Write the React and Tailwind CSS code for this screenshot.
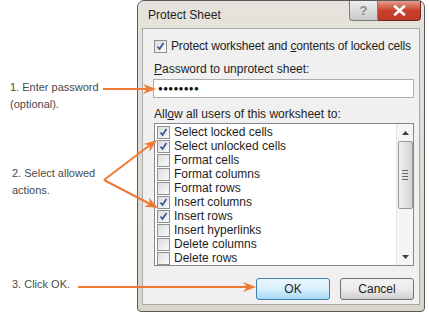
import React from 'react';

const items = [
  ['Select locked cells', true],
  ['Select unlocked cells', true],
  ['Format cells', false],
  ['Format columns', false],
  ['Format rows', false],
  ['Insert columns', true],
  ['Insert rows', true],
  ['Insert hyperlinks', false],
  ['Delete columns', false],
  ['Delete rows', false],
];

function Box({ checked }) {
  return (
    <span className="w-[13px] h-[13px] shrink-0 border border-[#8e8f8f] bg-gradient-to-br from-[#dcdcdc] to-[#fbfbfb] flex items-center justify-center">
      {checked && (
        <svg width="9" height="9" viewBox="0 0 9 9">
          <path d="M1.5 4.5 L3.5 7 L7.5 1" fill="none" stroke="#3a5a9c" strokeWidth="1.8" />
        </svg>
      )}
    </span>
  );
}

function Head({ x, y, dir }) {
  const c = Math.cos(dir);
  const s = Math.sin(dir);
  const pts = [
    [0, 0],
    [-13, -5],
    [-9, 0],
    [-13, 5],
  ].map(([a, b]) => `${x + a * c - b * s},${y + a * s + b * c}`);
  return <polygon points={pts.join(' ')} fill="#f07a35" />;
}

export default function App() {
  return (
    <div className="relative w-[429px] h-[314px] bg-white flex overflow-hidden font-['Liberation_Sans',sans-serif]">
      <div className="w-[137px] shrink-0 flex flex-col pl-[10px] pt-[79px] text-[11px] leading-[17px] text-[#4a4a4a]">
        <div>
          <div>1. Enter password</div>
          <div>(optional).</div>
        </div>
        <div className="mt-[52px] pl-[2px]">
          <div>2. Select allowed</div>
          <div>actions.</div>
        </div>
        <div className="mt-[77px] pl-[2px]">3. Click OK.</div>
      </div>

      <div className="w-[288px] h-[312px] shrink-0 flex flex-col rounded-t-[7px] rounded-b-[4px] border border-[#5a5a5a] bg-gradient-to-b from-[#e6e3dc] to-[#d9d5cc] text-[#1e1e1e] whitespace-nowrap">
        <div className="h-[27px] flex items-start">
          <div className="pl-[10px] pt-[6px] text-[12px] leading-[16px]">Protect Sheet</div>
          <div className="ml-auto mr-[3px] flex">
            <div className="w-[29px] h-[20px] border border-[#7c7c7c] border-t-0 rounded-bl-[4px] bg-gradient-to-b from-[#eeeeee] to-[#c9c9c9] flex items-center justify-center text-[13px] font-bold text-[#8a8a8a]">?</div>
            <div className="w-[43px] h-[20px] border border-[#6b2a22] border-t-0 border-l-0 rounded-br-[4px] bg-gradient-to-b from-[#e49c8c] via-[#c7402a] to-[#c2382a] flex items-center justify-center">
              <svg width="13" height="11" viewBox="0 0 13 11">
                <path d="M2 1.5 L11 9.5 M11 1.5 L2 9.5" stroke="#ffffff" strokeWidth="2.6" strokeLinecap="round" />
              </svg>
            </div>
          </div>
        </div>

        <div className="mx-[4px] mb-[6px] flex-1 border border-[#a9a9a9] bg-[#f0f0f0] pl-[11px] pr-[5px] pt-[9px] flex flex-col text-[12px] leading-[16px]">
          <div className="flex items-center gap-[4px]">
            <Box checked />
            <span className="tracking-[-0.15px]">
              Protect worksheet and <span className="underline">c</span>ontents of locked cells
            </span>
          </div>
          <div className="mt-[7px]">
            <span className="underline">P</span>assword to unprotect sheet:
          </div>
          <div className="mt-[2px] -ml-[1px] h-[19px] border border-[#abadb3] bg-white flex items-center pl-[4px] text-[8px] tracking-[0.3px] text-[#111]">
            ●●●●●●●●
          </div>
          <div className="mt-[8px]">
            All<span className="underline">o</span>w all users of this worksheet to:
          </div>
          <div className="mt-[1px] h-[143px] border border-[#828790] bg-white flex">
            <div className="flex-1 pl-[2px] pt-[1px] flex flex-col leading-[14px]">
              {items.map(([label, on]) => (
                <div key={label} className="h-[14.2px] flex items-center gap-[4px]">
                  <Box checked={on} />
                  <span>{label}</span>
                </div>
              ))}
            </div>
            <div className="w-[17px] bg-[#f5f5f5] border-l border-[#e6e6e6] flex flex-col items-center">
              <div className="h-[17px] flex items-center justify-center">
                <svg width="7" height="4" viewBox="0 0 7 4"><path d="M0 4 L3.5 0 L7 4Z" fill="#404040" /></svg>
              </div>
              <div className="w-[15px] h-[68px] rounded-[2px] border border-[#979797] bg-gradient-to-r from-[#f0f0f0] via-[#e3e3e3] to-[#d2d2d2] flex flex-col items-center justify-center gap-[2px]">
                <div className="w-[6px] h-[1px] bg-[#666]" />
                <div className="w-[6px] h-[1px] bg-[#666]" />
                <div className="w-[6px] h-[1px] bg-[#666]" />
                <div className="w-[6px] h-[1px] bg-[#666]" />
              </div>
              <div className="mt-auto h-[17px] flex items-center justify-center">
                <svg width="7" height="4" viewBox="0 0 7 4"><path d="M0 0 L3.5 4 L7 0Z" fill="#404040" /></svg>
              </div>
            </div>
          </div>
          <div className="mt-[12px] flex justify-end gap-[10px]">
            <div className="w-[74px] h-[22px] rounded-[3px] border border-[#3c7fb1] bg-gradient-to-b from-[#eaf6fd] via-[#d9f0fc] to-[#a7d9f5] flex items-center justify-center">OK</div>
            <div className="w-[74px] h-[22px] rounded-[3px] border border-[#707070] bg-gradient-to-b from-[#f2f2f2] via-[#ebebeb] to-[#cfcfcf] flex items-center justify-center">Cancel</div>
          </div>
        </div>
      </div>

      <svg className="absolute inset-0 pointer-events-none" width="429" height="314">
        <g stroke="#f07a35" strokeWidth="2" fill="none">
          <line x1="103" y1="89" x2="148" y2="89" />
          <line x1="104" y1="180" x2="150" y2="145" />
          <line x1="104" y1="180" x2="150" y2="204" />
          <line x1="78" y1="287" x2="248" y2="287" />
        </g>
        <Head x={156} y={89} dir={0} />
        <Head x={157} y={140} dir={Math.atan2(-35, 46)} />
        <Head x={158} y={208} dir={Math.atan2(24, 46)} />
        <Head x={256} y={287} dir={0} />
      </svg>
    </div>
  );
}
